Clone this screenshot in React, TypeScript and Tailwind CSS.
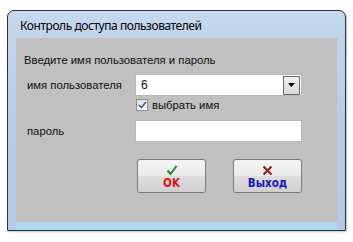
import React from "react";

export default function App() {
  return (
    <div className="w-[353px] h-[242px] bg-white pt-[10px] pl-[7px] font-['Liberation_Sans',Arial,sans-serif]">
      {/* window frame */}
      <div className="w-[339px] h-[221px] border border-[#27323f] rounded-t-[7px] rounded-b-[1px] flex flex-col bg-gradient-to-b from-[#c4d8ee] via-[#b6cde8] to-[#b3cbe7] shadow-[1px_1px_2px_rgba(0,0,0,0.25)]">
        <div className="h-[27px] pl-[12px] pt-[8px] text-[12px] leading-[14px] text-black font-['Noto_Sans',sans-serif] tracking-[-0.45px]">
          Контроль доступа пользователей
        </div>
        <div className="mx-[8px] h-[184px] bg-[#c0c0c0] pt-[15px] pl-[8px] text-[11.3px] text-[#111]">
          <div className="h-[14px] leading-[14px]">Введите имя пользователя и пароль</div>
          <div className="pl-[3px]">
            <div className="mt-[7px] flex items-center h-[22px]">
              <span className="w-[108px] leading-[14px]">имя пользователя</span>
              <Combo value="6" />
            </div>
            <div className="mt-[3px] ml-[109px] flex items-center h-[12px]">
              <Check />
              <span className="ml-[4px] leading-[14px]">выбрать имя</span>
            </div>
            <div className="mt-[9px] flex items-center h-[22px]">
              <span className="w-[108px] leading-[14px]">пароль</span>
              <div className="w-[167px] h-[22px] bg-white border border-[#b9b9b9]" />
            </div>
            <div className="mt-[17px] ml-[110px] flex gap-[27px]">
              <DlgButton icon="ok" label="OK" color="text-[#e31212]" />
              <DlgButton icon="x" label="Выход" color="text-[#1414c8]" />
            </div>
          </div>
        </div>
        <div className="mx-[8px] flex-1 bg-gradient-to-b from-[#b4d6f0] to-[#a6dcf4]" />
      </div>
    </div>
  );
}

function Combo({ value }: { value: string }) {
  return (
    <div className="w-[167px] h-[22px] bg-white border border-[#b9b9b9] flex items-center justify-between">
      <span className="pl-[5px] leading-[14px] text-[12px]">{value}</span>
      <div className="mr-[1px] w-[17px] h-[19px] border border-[#6a6a6a] bg-gradient-to-b from-[#f0f0f0] to-[#d8d8d8] flex items-center justify-center">
        <svg width="7" height="4" viewBox="0 0 7 4">
          <path d="M0 0h7L3.5 4z" fill="#000" />
        </svg>
      </div>
    </div>
  );
}

function Check() {
  return (
    <div className="w-[12px] h-[12px] border border-[#8e8f8f] bg-gradient-to-br from-[#dcdcdc] to-[#ffffff] flex items-center justify-center">
      <svg width="9" height="8" viewBox="0 0 9 8">
        <path d="M1 4l2.5 2.5L8 1" stroke="#3d5aa8" strokeWidth="1.6" fill="none" />
      </svg>
    </div>
  );
}

function DlgButton({ icon, label, color }: { icon: "ok" | "x"; label: string; color: string }) {
  return (
    <div className="w-[69px] h-[34px] rounded-[3px] border border-[#7c7c7c] overflow-hidden flex flex-col items-center relative bg-gradient-to-b from-[#f4f4f4] via-[#ebebeb] to-[#d2d2d2]">
      <div className="absolute inset-x-0 top-1/2 bottom-0 bg-gradient-to-b from-[#dedede] to-[#d0d0d0]" />
      <div className="relative mt-[4px] h-[12px] flex items-center">
        {icon === "ok" ? (
          <svg width="12" height="11" viewBox="0 0 12 11">
            <path d="M1.5 5.5l3 3.5L10.5 1" stroke="#1d8c23" strokeWidth="2" fill="none" />
          </svg>
        ) : (
          <svg width="11" height="11" viewBox="0 0 11 11">
            <path d="M1.5 1.5l8 8M9.5 1.5l-8 8" stroke="#8a1d1d" strokeWidth="2" fill="none" />
          </svg>
        )}
      </div>
      <span className={`relative mt-[1px] text-[11.5px] leading-[13px] font-bold font-['DejaVu_Sans_Condensed','DejaVu_Sans',sans-serif] ${color}`}>
        {label}
      </span>
    </div>
  );
}
